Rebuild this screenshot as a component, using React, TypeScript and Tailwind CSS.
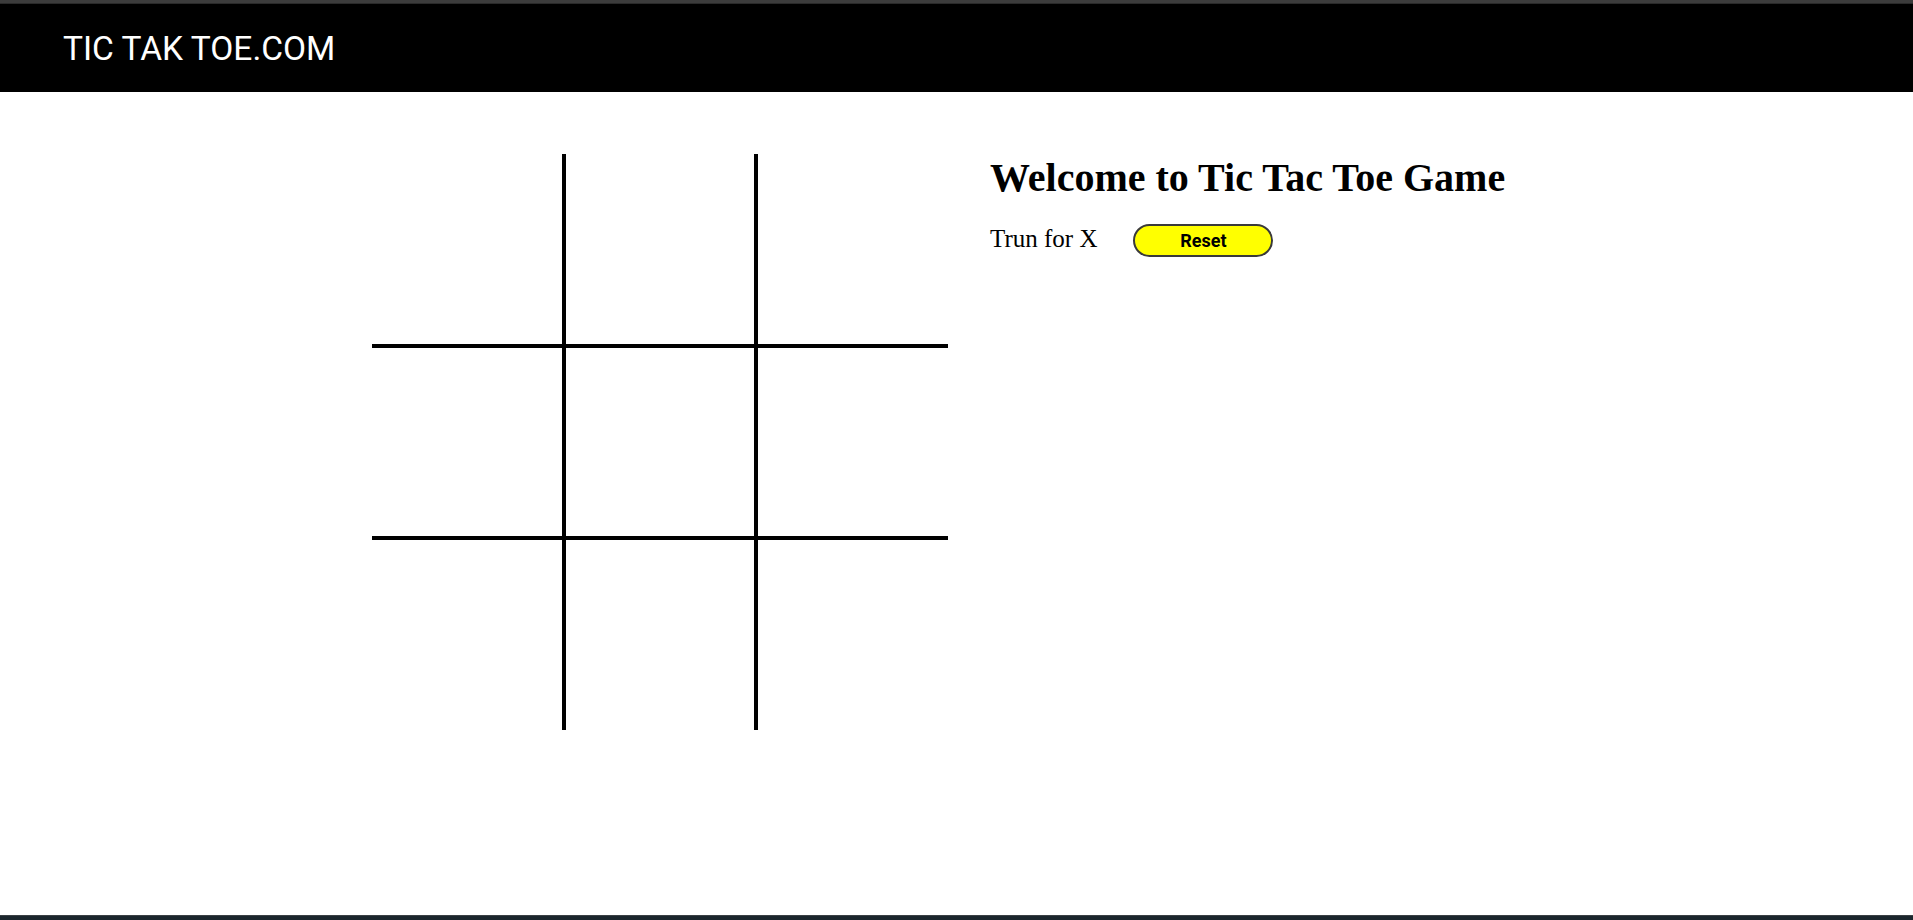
import { useState } from 'react';

type Cell = 'X' | 'O' | null;

export default function App() {
  const [cells, setCells] = useState<Cell[]>(Array(9).fill(null));
  const [turn, setTurn] = useState<'X' | 'O'>('X');

  // 点击格子
  const play = (i: number) => {
    if (cells[i]) return;
    const next = [...cells];
    next[i] = turn;
    setCells(next);
    setTurn(turn === 'X' ? 'O' : 'X');
  };

  const reset = () => {
    setCells(Array(9).fill(null));
    setTurn('X');
  };

  return (
    <div className="h-[920px] w-full flex flex-col bg-white overflow-hidden">
      {/* window chrome strip */}
      <div className="h-[4px] bg-[#3c3c3c] border-b border-[#2a2a2a] flex-shrink-0" />

      {/* header */}
      <header className="h-[88px] bg-black flex items-center pl-[63px] pt-[2px] flex-shrink-0">
        <span className="text-white text-[33.5px] font-normal" style={{ fontFamily: 'Roboto, "Liberation Sans", sans-serif' }}>
          TIC TAK TOE.COM
        </span>
      </header>

      {/* main */}
      <main className="flex-1 flex items-start pl-[372px] pt-[62px]" style={{ fontFamily: '"Liberation Serif", "Times New Roman", serif' }}>
        <div className="grid grid-cols-[194px_192px_190px] grid-rows-[194px_192px_190px]">
          {cells.map((c, i) => {
            const col = i % 3;
            const row = Math.floor(i / 3);
            return (
              <button
                key={i}
                onClick={() => play(i)}
                className={
                  'border-black flex items-center justify-center text-[96px]' +
                  (col < 2 ? ' border-r-4' : '') +
                  (row < 2 ? ' border-b-4' : '')
                }
              >
                {c}
              </button>
            );
          })}
        </div>

        <div className="ml-[42px] pt-[4px] flex flex-col">
          <h1 className="text-[40px] leading-none font-bold text-black">Welcome to Tic Tac Toe Game</h1>
          <div className="flex items-start mt-[26px]">
            <span className="text-[25px] leading-none mt-[2px] text-black">Trun for {turn}</span>
            <button
              onClick={reset}
              className="ml-[36px] w-[140px] h-[33px] rounded-full bg-[#ffff00] border-2 border-[#3a3a3a] text-[18px] font-bold text-black"
              style={{ fontFamily: 'Roboto, "Liberation Sans", sans-serif' }}
            >
              Reset
            </button>
          </div>
        </div>
      </main>

      {/* taskbar strip */}
      <div className="h-[5px] bg-[#1b262d] border-t border-[#3a4044] flex-shrink-0" />
    </div>
  );
}
